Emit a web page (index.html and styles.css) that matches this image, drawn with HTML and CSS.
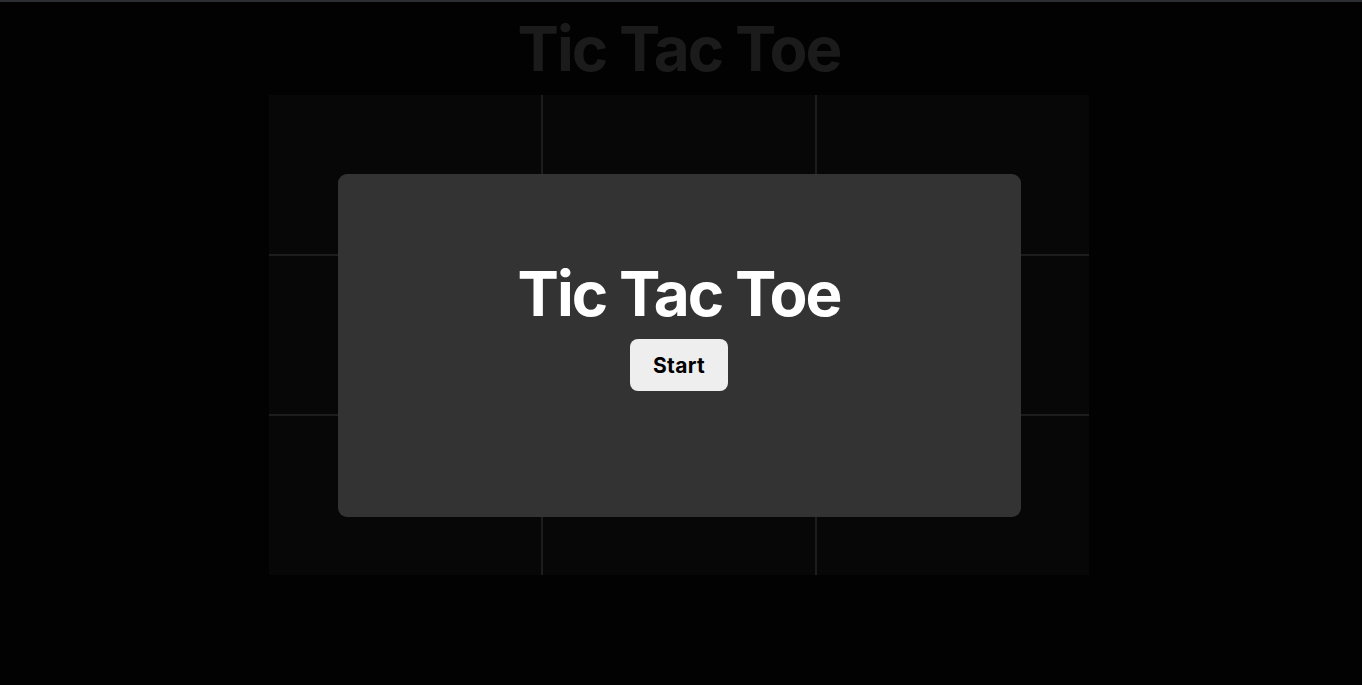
FILE: index.html
```html
<!DOCTYPE html>
<html lang="en">
<head>
<meta charset="utf-8">
<title>Tic Tac Toe</title>
<link rel="stylesheet" href="styles.css">
</head>
<body>
<div class="page">
  <h1 class="title">Tic Tac Toe</h1>
  <div class="board">
    <div class="cell"></div><div class="cell"></div><div class="cell"></div>
    <div class="cell"></div><div class="cell"></div><div class="cell"></div>
    <div class="cell"></div><div class="cell"></div><div class="cell"></div>
  </div>
</div>
<div class="overlay">
  <div class="modal">
    <h2 class="modal-title">Tic Tac Toe</h2>
    <button class="start">Start</button>
  </div>
</div>
</body>
</html>
```

FILE: styles.css
```css
html, body {
  margin: 0;
  padding: 0;
  height: 100%;
}
body {
  background: #020202;
  border-top: 2px solid #2b2d30;
  box-sizing: border-box;
  font-family: "Inter", "Noto Sans", sans-serif;
  overflow: hidden;
}
.page {
  display: flex;
  flex-direction: column;
  align-items: center;
  padding-right: 4px;
}
.title {
  margin: 0;
  height: 93px;
  display: flex;
  align-items: center;
  justify-content: center;
  font-size: 62px;
  font-weight: 700;
  color: #1b1b1b;
  line-height: 1;
  letter-spacing: -2px;
}
.board {
  width: 820px;
  height: 480px;
  display: grid;
  grid-template-columns: repeat(3, 1fr);
  grid-template-rows: repeat(3, 1fr);
  gap: 2px;
  background: #1d1d1d;
}
.cell {
  background: #070707;
}
.overlay {
  position: fixed;
  top: 0;
  left: 0;
  right: 4px;
  bottom: 0;
  display: flex;
  justify-content: center;
  align-items: flex-start;
}
.modal {
  margin-top: 174px;
  width: 683px;
  height: 343px;
  box-sizing: border-box;
  background: #333333;
  border-radius: 9px;
  display: flex;
  flex-direction: column;
  align-items: center;
  padding-top: 89px;
}
.modal-title {
  margin: 0 0 14px;
  font-size: 62px;
  font-weight: 700;
  color: #ffffff;
  line-height: 1;
  letter-spacing: -2px;
}
.start {
  width: 98px;
  height: 52px;
  border: none;
  border-radius: 8px;
  background: #eeeeee;
  color: #000000;
  font-family: "Inter", "Noto Sans", sans-serif;
  font-weight: 700;
  font-size: 21px;
  letter-spacing: 0.3px;
  padding: 0;
  cursor: pointer;
}
```
